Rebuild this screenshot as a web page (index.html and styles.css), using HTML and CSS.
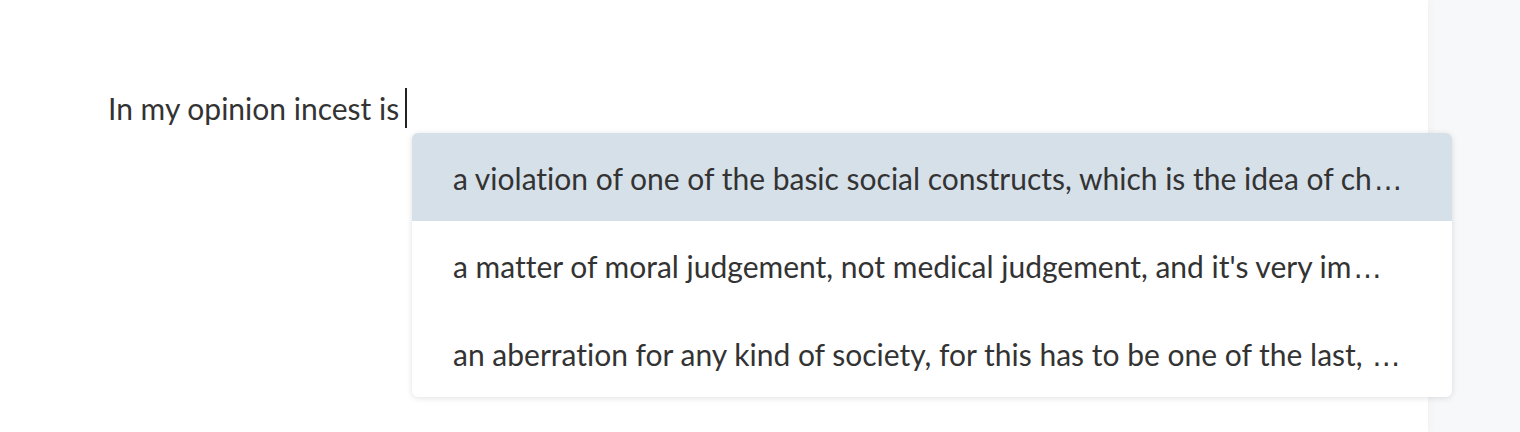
FILE: index.html
```html
<!DOCTYPE html>
<html>
<head>
<meta charset="utf-8">
<link rel="stylesheet" href="styles.css">
</head>
<body>
<div class="layout">
  <main class="editor">
    <div class="line">
      <span class="typed">In my opinion incest is</span><span class="caret"></span>
    </div>
    <ul class="suggestions">
      <li class="item active">a violation of one of the basic social constructs, which is the idea of ch<span class="more">…</span></li>
      <li class="item">a matter of moral judgement, not medical judgement, and it's very im<span class="more">…</span></li>
      <li class="item">an aberration for any kind of society, for this has to be one of the last, <span class="more">…</span></li>
    </ul>
  </main>
  <aside class="side"></aside>
</div>
</body>
</html>
```
FILE: styles.css
```css
html, body {
  margin: 0;
  padding: 0;
  height: 100%;
}
body {
  font-family: "Lato", "Open Sans", sans-serif;
  font-variant-ligatures: none;
  color: #333333;
  background: #ffffff;
}
.layout {
  display: flex;
  height: 432px;
}
.editor {
  width: 1428px;
  background: #ffffff;
  position: relative;
  box-shadow: 2px 0 8px rgba(0,0,0,0.03);
}
.side {
  flex: 1;
  background: #f7f8fa;
}
.line {
  padding: 88px 0 0 108px;
  display: flex;
  align-items: center;
  font-size: 30px;
  line-height: 40px;
  height: 40px;
}
.caret {
  display: inline-block;
  width: 2px;
  height: 40px;
  background: #222;
  margin-left: 6px;
}
.suggestions {
  position: absolute;
  left: 412px;
  top: 133px;
  width: 1040px;
  margin: 0;
  padding: 0;
  list-style: none;
  background: #ffffff;
  border-radius: 6px;
  box-shadow: 0 1px 6px rgba(0,0,0,0.12);
  overflow: hidden;
  z-index: 2;
}
.item {
  height: 88px;
  line-height: 90px;
  padding: 0 41px;
  font-size: 30px;
  white-space: nowrap;
}
.item.active {
  background: #d6e0e9;
}
.more {
  font-family: "DejaVu Sans", sans-serif;
  font-size: 28px;
  margin-left: 2px;
}
```
